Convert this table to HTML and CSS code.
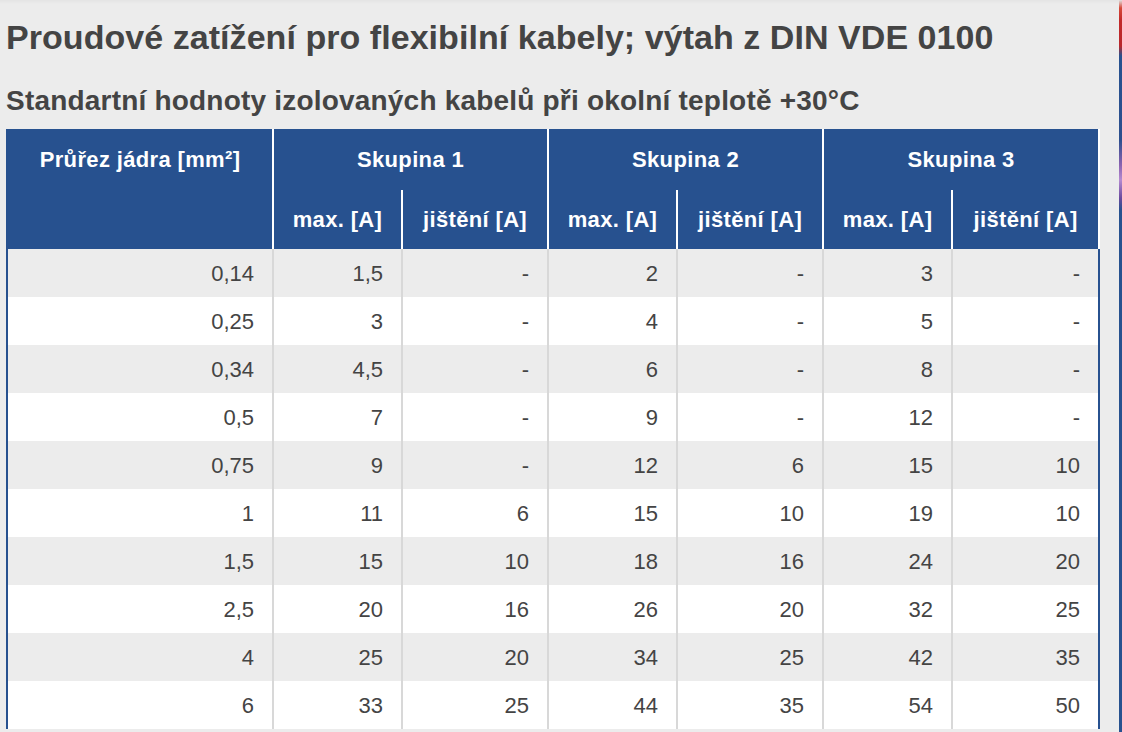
FILE: index.html
```html
<!DOCTYPE html>
<html lang="cs">
<head>
<meta charset="utf-8">
<title>Proudové zatížení pro flexibilní kabely</title>
<link rel="stylesheet" href="styles.css">
</head>
<body>
<div class="page">
  <main class="content">
    <h1 class="title">Proudové zatížení pro flexibilní kabely; výtah z DIN VDE 0100</h1>
    <h2 class="subtitle">Standartní hodnoty izolovaných kabelů při okolní teplotě +30°C</h2>
    <table class="load-table">
      <colgroup>
        <col class="c-first">
        <col class="c-max">
        <col class="c-fuse">
        <col class="c-max">
        <col class="c-fuse">
        <col class="c-max">
        <col class="c-fuse c-last">
      </colgroup>
      <thead>
        <tr class="head-top">
          <th rowspan="2" class="th-first">Průřez jádra [mm²]</th>
          <th colspan="2">Skupina 1</th>
          <th colspan="2">Skupina 2</th>
          <th colspan="2">Skupina 3</th>
        </tr>
        <tr class="head-sub">
          <th>max. [A]</th>
          <th>jištění [A]</th>
          <th>max. [A]</th>
          <th>jištění [A]</th>
          <th>max. [A]</th>
          <th>jištění [A]</th>
        </tr>
      </thead>
      <tbody>
        <tr><td>0,14</td><td>1,5</td><td>-</td><td>2</td><td>-</td><td>3</td><td>-</td></tr>
        <tr><td>0,25</td><td>3</td><td>-</td><td>4</td><td>-</td><td>5</td><td>-</td></tr>
        <tr><td>0,34</td><td>4,5</td><td>-</td><td>6</td><td>-</td><td>8</td><td>-</td></tr>
        <tr><td>0,5</td><td>7</td><td>-</td><td>9</td><td>-</td><td>12</td><td>-</td></tr>
        <tr><td>0,75</td><td>9</td><td>-</td><td>12</td><td>6</td><td>15</td><td>10</td></tr>
        <tr><td>1</td><td>11</td><td>6</td><td>15</td><td>10</td><td>19</td><td>10</td></tr>
        <tr><td>1,5</td><td>15</td><td>10</td><td>18</td><td>16</td><td>24</td><td>20</td></tr>
        <tr><td>2,5</td><td>20</td><td>16</td><td>26</td><td>20</td><td>32</td><td>25</td></tr>
        <tr><td>4</td><td>25</td><td>20</td><td>34</td><td>25</td><td>42</td><td>35</td></tr>
        <tr><td>6</td><td>33</td><td>25</td><td>44</td><td>35</td><td>54</td><td>50</td></tr>
      </tbody>
    </table>
  </main>
  <div class="edge-strip"></div>
</div>
</body>
</html>
```

FILE: styles.css
```css
* {
  box-sizing: border-box;
}

html, body {
  margin: 0;
  padding: 0;
  height: 100%;
  overflow: hidden;
  background: #ececec;
}

body {
  font-family: "Liberation Sans", Arial, sans-serif;
  color: #444444;
}

.page {
  display: flex;
  height: 100%;
}

.content {
  flex: 1;
  padding: 0 0 0 6px;
  background: linear-gradient(#e4e4e4 0, #ececec 4px);
}

.edge-strip {
  width: 3px;
  flex: none;
  background: linear-gradient(#e0e0e0 0, #d64a3a 8px, #c22a2a 20px, #b8282c 46px, #27518f 56px, #2c4f8e 140px, #8a62b0 165px, #b48ad0 180px, #6a4a9e 198px, #27518f 210px, #27518f 100%);
}

.title {
  margin: 18px 0 0;
  font-size: 34px;
  line-height: 39px;
  font-weight: bold;
  letter-spacing: 0.05px;
  color: #444444;
}

.subtitle {
  margin: 28px 0 12px;
  font-size: 28px;
  line-height: 32px;
  font-weight: bold;
  letter-spacing: 0.2px;
  color: #444444;
}

.load-table {
  table-layout: fixed;
  border-collapse: separate;
  border-spacing: 0;
  width: 1094px;
  border-left: 2px solid #27518f;
  font-size: 22px;
}

.c-first { width: 266px; }
.c-max { width: 129px; }
.c-fuse { width: 146px; }
.c-last { width: 147px; }

.load-table th {
  background: #27518f;
  color: #ffffff;
  font-weight: bold;
  text-align: center;
  padding: 0;
  border-right: 2px solid #ffffff;
  line-height: 25px;
  letter-spacing: 0.35px;
}

.head-top th {
  height: 61px;
  vertical-align: middle;
}

.head-top .th-first {
  vertical-align: top;
  padding-top: 18px;
}

.head-sub th {
  height: 59px;
  vertical-align: middle;
}

.load-table td {
  height: 48px;
  padding: 0 18px 0 0;
  text-align: right;
  vertical-align: middle;
  line-height: 25px;
  color: #444444;
  border-right: 2px solid #d8d8d8;
}

.load-table td:last-child {
  border-right-color: #27518f;
}

.load-table tbody tr:nth-child(odd) td {
  background: #ececec;
}

.load-table tbody tr:nth-child(even) td {
  background: #ffffff;
}
```
